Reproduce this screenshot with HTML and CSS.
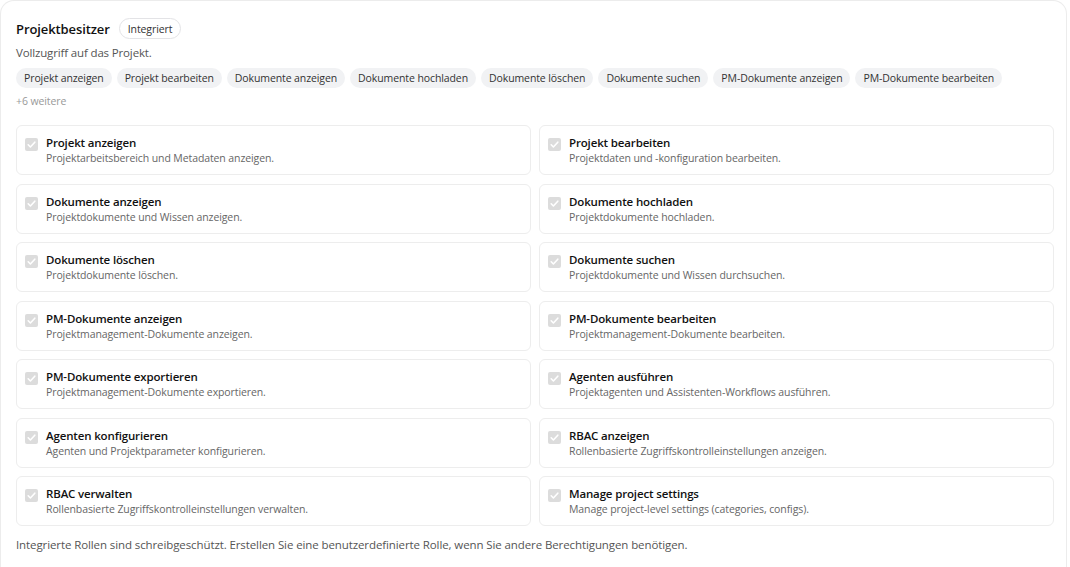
FILE: index.html
```html
<!DOCTYPE html>
<html lang="de">
<head>
<meta charset="utf-8">
<title>Projektbesitzer</title>
<link rel="stylesheet" href="styles.css">
</head>
<body>
<section class="panel">
  <header class="head">
    <h2 class="title">Projektbesitzer</h2>
    <span class="badge">Integriert</span>
  </header>
  <p class="subtitle">Vollzugriff auf das Projekt.</p>
  <div class="chips">
    <span class="chip">Projekt anzeigen</span>
    <span class="chip">Projekt bearbeiten</span>
    <span class="chip">Dokumente anzeigen</span>
    <span class="chip">Dokumente hochladen</span>
    <span class="chip">Dokumente löschen</span>
    <span class="chip">Dokumente suchen</span>
    <span class="chip">PM-Dokumente anzeigen</span>
    <span class="chip">PM-Dokumente bearbeiten</span>
  </div>
  <div class="more">+6 weitere</div>
  <div class="grid">
    <label class="perm"><span class="cb"><svg viewBox="0 0 13 13"><path d="M3.2 6.8 L5.4 9 L9.8 4.2" /></svg></span><span class="txt"><span class="pname">Projekt anzeigen</span><span class="pdesc">Projektarbeitsbereich und Metadaten anzeigen.</span></span></label>
    <label class="perm"><span class="cb"><svg viewBox="0 0 13 13"><path d="M3.2 6.8 L5.4 9 L9.8 4.2" /></svg></span><span class="txt"><span class="pname">Projekt bearbeiten</span><span class="pdesc">Projektdaten und -konfiguration bearbeiten.</span></span></label>
    <label class="perm"><span class="cb"><svg viewBox="0 0 13 13"><path d="M3.2 6.8 L5.4 9 L9.8 4.2" /></svg></span><span class="txt"><span class="pname">Dokumente anzeigen</span><span class="pdesc">Projektdokumente und Wissen anzeigen.</span></span></label>
    <label class="perm"><span class="cb"><svg viewBox="0 0 13 13"><path d="M3.2 6.8 L5.4 9 L9.8 4.2" /></svg></span><span class="txt"><span class="pname">Dokumente hochladen</span><span class="pdesc">Projektdokumente hochladen.</span></span></label>
    <label class="perm"><span class="cb"><svg viewBox="0 0 13 13"><path d="M3.2 6.8 L5.4 9 L9.8 4.2" /></svg></span><span class="txt"><span class="pname">Dokumente löschen</span><span class="pdesc">Projektdokumente löschen.</span></span></label>
    <label class="perm"><span class="cb"><svg viewBox="0 0 13 13"><path d="M3.2 6.8 L5.4 9 L9.8 4.2" /></svg></span><span class="txt"><span class="pname">Dokumente suchen</span><span class="pdesc">Projektdokumente und Wissen durchsuchen.</span></span></label>
    <label class="perm"><span class="cb"><svg viewBox="0 0 13 13"><path d="M3.2 6.8 L5.4 9 L9.8 4.2" /></svg></span><span class="txt"><span class="pname">PM-Dokumente anzeigen</span><span class="pdesc">Projektmanagement-Dokumente anzeigen.</span></span></label>
    <label class="perm"><span class="cb"><svg viewBox="0 0 13 13"><path d="M3.2 6.8 L5.4 9 L9.8 4.2" /></svg></span><span class="txt"><span class="pname">PM-Dokumente bearbeiten</span><span class="pdesc">Projektmanagement-Dokumente bearbeiten.</span></span></label>
    <label class="perm"><span class="cb"><svg viewBox="0 0 13 13"><path d="M3.2 6.8 L5.4 9 L9.8 4.2" /></svg></span><span class="txt"><span class="pname">PM-Dokumente exportieren</span><span class="pdesc">Projektmanagement-Dokumente exportieren.</span></span></label>
    <label class="perm"><span class="cb"><svg viewBox="0 0 13 13"><path d="M3.2 6.8 L5.4 9 L9.8 4.2" /></svg></span><span class="txt"><span class="pname">Agenten ausführen</span><span class="pdesc">Projektagenten und Assistenten-Workflows ausführen.</span></span></label>
    <label class="perm"><span class="cb"><svg viewBox="0 0 13 13"><path d="M3.2 6.8 L5.4 9 L9.8 4.2" /></svg></span><span class="txt"><span class="pname">Agenten konfigurieren</span><span class="pdesc">Agenten und Projektparameter konfigurieren.</span></span></label>
    <label class="perm"><span class="cb"><svg viewBox="0 0 13 13"><path d="M3.2 6.8 L5.4 9 L9.8 4.2" /></svg></span><span class="txt"><span class="pname">RBAC anzeigen</span><span class="pdesc">Rollenbasierte Zugriffskontrolleinstellungen anzeigen.</span></span></label>
    <label class="perm"><span class="cb"><svg viewBox="0 0 13 13"><path d="M3.2 6.8 L5.4 9 L9.8 4.2" /></svg></span><span class="txt"><span class="pname">RBAC verwalten</span><span class="pdesc">Rollenbasierte Zugriffskontrolleinstellungen verwalten.</span></span></label>
    <label class="perm"><span class="cb"><svg viewBox="0 0 13 13"><path d="M3.2 6.8 L5.4 9 L9.8 4.2" /></svg></span><span class="txt"><span class="pname">Manage project settings</span><span class="pdesc">Manage project-level settings (categories, configs).</span></span></label>
  </div>
  <p class="footnote">Integrierte Rollen sind schreibgeschützt. Erstellen Sie eine benutzerdefinierte Rolle, wenn Sie andere Berechtigungen benötigen.</p>
</section>
</body>
</html>
```

FILE: styles.css
```css
* { box-sizing: border-box; }
html, body { margin: 0; padding: 0; background: #fff; }
body {
  font-family: "Open Sans", "Noto Sans", "Liberation Sans", sans-serif;
  color: #1a1a1a;
}
.panel {
  width: 1067px;
  height: 567px;
  border: 1px solid #ececec;
  border-bottom: none;
  border-radius: 14px 14px 0 0;
  padding: 17px 15px 0 15px;
}
.head {
  display: flex;
  align-items: center;
  gap: 9px;
  height: 21px;
}
.title {
  margin: 0;
  font-size: 13px;
  font-weight: 600;
  color: #111;
  letter-spacing: -0.1px;
}
.badge {
  display: inline-flex;
  align-items: center;
  height: 21px;
  padding: 0 8px;
  border: 1px solid #e3e3e6;
  border-radius: 11px;
  font-size: 10.5px;
  color: #333;
  letter-spacing: -0.1px;
}
.subtitle {
  margin: 6px 0 0 0;
  font-size: 11.5px;
  color: #555;
  line-height: 16px;
  letter-spacing: -0.15px;
}
.chips {
  display: flex;
  flex-wrap: wrap;
  gap: 5px;
  margin-top: 7px;
}
.chip {
  display: inline-flex;
  align-items: center;
  height: 20px;
  padding: 0 8px;
  background: #f1f2f4;
  border-radius: 10px;
  font-size: 10.5px;
  color: #333;
  letter-spacing: -0.1px;
}
.more {
  margin-top: 5px;
  font-size: 10.5px;
  color: #999;
  line-height: 16px;
  letter-spacing: -0.1px;
}
.grid {
  display: grid;
  grid-template-columns: 1fr 1fr;
  column-gap: 8px;
  row-gap: 8.5px;
  margin-top: 16px;
  width: 1038px;
}
.perm {
  display: flex;
  align-items: flex-start;
  gap: 8px;
  height: 50px;
  padding: 9px 8px 0 8px;
  border: 1px solid #ededed;
  border-radius: 6px;
}
.cb {
  flex: none;
  width: 13px;
  height: 13px;
  margin-top: 3px;
  border-radius: 2px;
  background: #dcdcdc;
}
.cb svg {
  display: block;
  width: 13px;
  height: 13px;
  fill: none;
  stroke: #fff;
  stroke-width: 1.6;
  stroke-linecap: round;
  stroke-linejoin: round;
}
.txt {
  display: flex;
  flex-direction: column;
}
.pname {
  font-size: 11.5px;
  font-weight: 600;
  color: #111;
  line-height: 15px;
  letter-spacing: -0.15px;
}
.pdesc {
  margin-top: 1px;
  font-size: 10.5px;
  color: #666;
  line-height: 15px;
  letter-spacing: -0.1px;
}
.footnote {
  margin: 11px 0 0 0;
  font-size: 11.5px;
  color: #555;
  line-height: 16px;
  letter-spacing: -0.1px;
}
```
